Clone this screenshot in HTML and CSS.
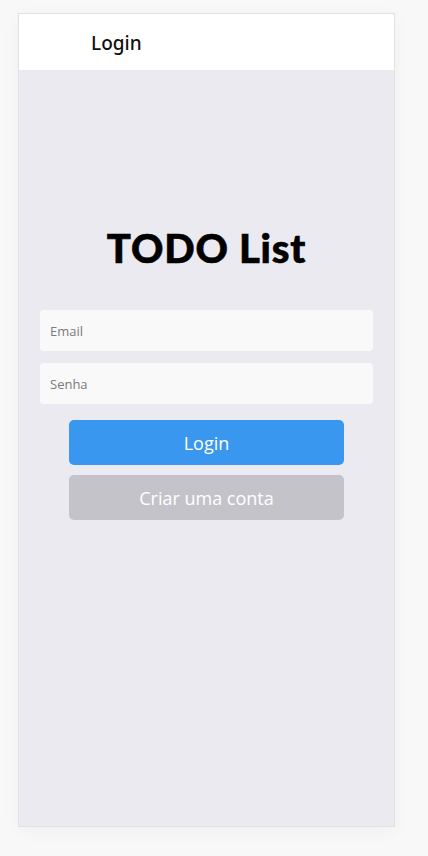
FILE: index.html
```html
<!DOCTYPE html>
<html lang="pt">
<head>
<meta charset="utf-8">
<title>Login</title>
<link rel="stylesheet" href="styles.css">
</head>
<body>
<div class="frame">
  <header class="topbar"><span class="topbar-title">Login</span></header>
  <main class="content">
    <h1 class="title">TODO List</h1>
    <div class="fields">
      <input class="field" type="text" placeholder="Email">
      <input class="field" type="password" placeholder="Senha">
    </div>
    <div class="actions">
      <button class="btn btn-primary">Login</button>
      <button class="btn btn-secondary">Criar uma conta</button>
    </div>
  </main>
</div>
</body>
</html>
```
FILE: styles.css
```css
html, body { margin: 0; padding: 0; }
body {
  background: #f8f8f8;
  font-family: "Open Sans", "Noto Sans", sans-serif;
  padding: 13px 0 0 18px;
  height: 856px;
  box-sizing: border-box;
  overflow: hidden;
}
.frame {
  width: 377px;
  height: 814px;
  box-sizing: border-box;
  border: 1px solid #e2e2e4;
  background: #ebeaf0;
  box-shadow: 0 4px 18px rgba(0,0,0,0.04);
  display: flex;
  flex-direction: column;
}
.topbar {
  height: 56px;
  background: #fff;
  display: flex;
  align-items: center;
  padding-left: 72px;
  flex-shrink: 0;
}
.topbar-title {
  font-family: "Noto Sans", sans-serif;
  font-size: 19px;
  font-weight: 500;
  color: #111;
  position: relative;
  top: 1px;
}
.content {
  display: flex;
  flex-direction: column;
  align-items: stretch;
  padding-top: 150px;
}
.title {
  margin: 0;
  text-align: center;
  font-family: "Lato", sans-serif;
  font-weight: 900;
  font-size: 40px;
  line-height: 56px;
  color: #000;
  letter-spacing: 0.8px;
  -webkit-text-stroke: 0.6px #000;
}
.fields {
  display: flex;
  flex-direction: column;
  gap: 12px;
  padding: 0 21px;
  margin-top: 34px;
}
.field {
  height: 41px;
  box-sizing: border-box;
  border: none;
  border-radius: 4px;
  background: #f9f9f9;
  padding: 0 10px;
  font-family: "Open Sans", sans-serif;
  font-size: 13px;
  color: #333;
  outline: none;
}
.field::placeholder { color: #7a7a7a; }
.actions {
  display: flex;
  flex-direction: column;
  gap: 10px;
  padding: 0 50px;
  margin-top: 16px;
}
.btn {
  height: 45px;
  border: none;
  border-radius: 5px;
  color: #fff;
  font-family: "Open Sans", sans-serif;
  font-size: 18px;
  cursor: pointer;
}
.btn-primary { background: #3a97f0; }
.btn-secondary { background: #c4c3ca; }
```
